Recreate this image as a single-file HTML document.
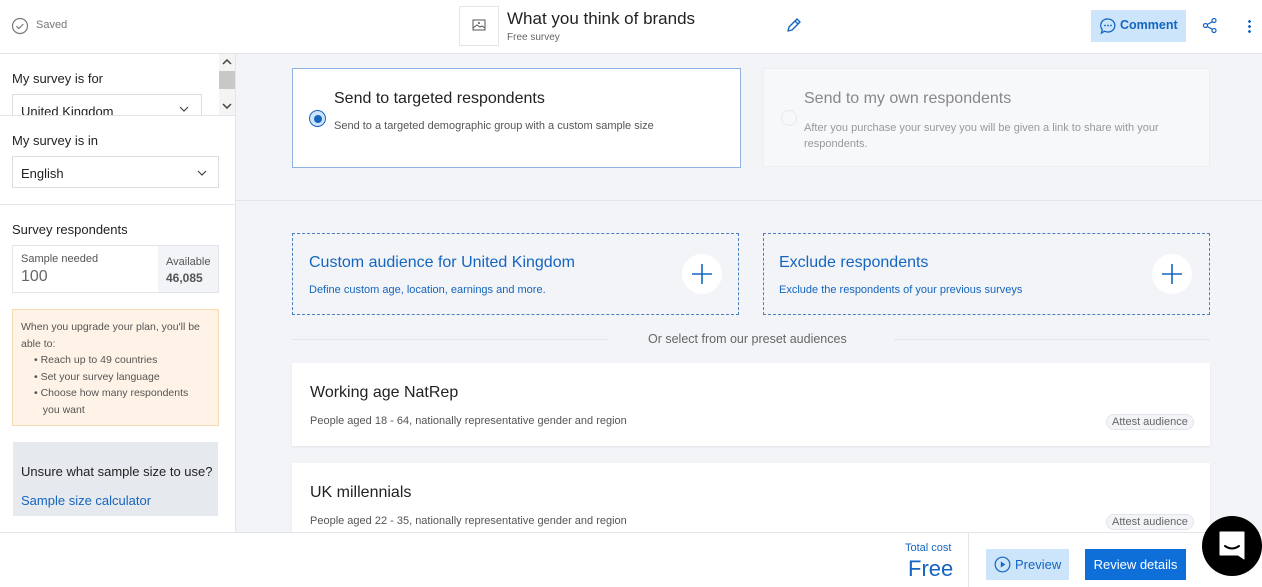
<!DOCTYPE html>
<html><head><meta charset="utf-8"><style>
*{box-sizing:border-box;margin:0;padding:0}
body{width:1262px;height:587px;overflow:hidden;font-family:"Liberation Sans",Arial,sans-serif;background:#f2f4f8;position:relative;color:#222}
.a{position:absolute}
.blue{color:#1565c0}
</style></head><body>
<!-- header -->
<div class="a" style="left:0;top:0;width:1262px;height:54px;background:#fff;border-bottom:1px solid #e3e5ea"></div>
<svg class="a" style="left:11px;top:17px" width="18" height="18" viewBox="0 0 18 18"><circle cx="9" cy="9" r="7.5" fill="none" stroke="#777" stroke-width="1.2"/><path d="M5.5 9.2l2.3 2.3 4.5-4.5" fill="none" stroke="#777" stroke-width="1.2"/></svg>
<div class="a" style="left:36px;top:19px;font-size:11px;color:#777">Saved</div>
<div class="a" style="left:459px;top:6px;width:40px;height:40px;border:1px solid #e3e5ea;background:#fff"></div>
<svg class="a" style="left:472px;top:19px" width="14" height="13" viewBox="0 0 14 13"><rect x="1" y="1" width="12" height="10" fill="none" stroke="#555" stroke-width="1"/><path d="M1 9l4-3 3 2 2-1 3 2" fill="none" stroke="#555"/><circle cx="7" cy="4" r="1" fill="#555"/></svg>
<div class="a" style="left:507px;top:9px;font-size:17px;color:#222">What you think of brands</div>
<div class="a" style="left:507px;top:32px;font-size:10px;color:#666">Free survey</div>
<svg class="a" style="left:785px;top:17px" width="17" height="17" viewBox="0 0 17 17"><path d="M3 14l1-4 8-8 3 3-8 8z M10 4l3 3" fill="none" stroke="#1565c0" stroke-width="1.4" stroke-linejoin="round"/></svg>
<div class="a" style="left:1091px;top:10px;width:95px;height:32px;background:#cce5fb"></div>
<svg class="a" style="left:1099px;top:17px" width="18" height="18" viewBox="0 0 18 18"><path d="M9 2a7 6.5 0 1 1-3.5 12.2L2.5 16l.8-3.3A6.5 6.5 0 0 1 9 2z" fill="none" stroke="#1565c0" stroke-width="1.3"/><circle cx="6" cy="8.5" r=".9" fill="#1565c0"/><circle cx="9" cy="8.5" r=".9" fill="#1565c0"/><circle cx="12" cy="8.5" r=".9" fill="#1565c0"/></svg>
<div class="a" style="left:1120px;top:18px;font-size:12.5px;font-weight:bold;color:#1565c0">Comment</div>
<svg class="a" style="left:1202px;top:17px" width="16" height="17" viewBox="0 0 16 17"><circle cx="12" cy="3.5" r="2" fill="none" stroke="#1565c0" stroke-width="1.2"/><circle cx="12" cy="13.5" r="2" fill="none" stroke="#1565c0" stroke-width="1.2"/><circle cx="3.5" cy="8.5" r="2" fill="none" stroke="#1565c0" stroke-width="1.2"/><path d="M5.3 7.5l5-2.8M5.3 9.5l5 2.8" stroke="#1565c0" stroke-width="1.2"/></svg>
<div class="a" style="left:1248px;top:19px;width:3px;height:14px;background:radial-gradient(circle,#1565c0 1.3px,transparent 1.5px) 0 0/3px 5px"></div>

<!-- sidebar -->
<div class="a" style="left:0;top:54px;width:236px;height:478px;background:#fff;border-right:1px solid #e3e5ea"></div>
<div class="a" style="left:12px;top:71px;font-size:13px">My survey is for</div>
<div class="a" style="left:12px;top:94px;width:190px;height:22px;border:1px solid #ddd;border-bottom:none;font-size:13px;padding:9px 8px;overflow:hidden">United Kingdom</div>
<svg class="a" style="left:179px;top:106px" width="10" height="6" viewBox="0 0 10 6"><path d="M1 1l4 4 4-4" fill="none" stroke="#444" stroke-width="1.2"/></svg>
<div class="a" style="left:219px;top:54px;width:16px;height:62px;background:#f4f4f4"></div>
<div class="a" style="left:219px;top:71px;width:16px;height:18px;background:#c8c8c8"></div>
<svg class="a" style="left:222px;top:59px" width="10" height="6" viewBox="0 0 10 6"><path d="M1 5l4-4 4 4" fill="none" stroke="#444" stroke-width="1.5"/></svg>
<svg class="a" style="left:222px;top:103px" width="10" height="6" viewBox="0 0 10 6"><path d="M1 1l4 4 4-4" fill="none" stroke="#444" stroke-width="1.5"/></svg>
<div class="a" style="left:0;top:115px;width:235px;height:1px;background:#e3e5ea"></div>
<div class="a" style="left:12px;top:133px;font-size:13px">My survey is in</div>
<div class="a" style="left:12px;top:156px;width:207px;height:32px;border:1px solid #ddd;font-size:13px;padding:9px 8px">English</div>
<svg class="a" style="left:197px;top:170px" width="10" height="6" viewBox="0 0 10 6"><path d="M1 1l4 4 4-4" fill="none" stroke="#444" stroke-width="1.2"/></svg>
<div class="a" style="left:0;top:204px;width:235px;height:1px;background:#e3e5ea"></div>
<div class="a" style="left:12px;top:222px;font-size:13px">Survey respondents</div>
<div class="a" style="left:12px;top:245px;width:207px;height:48px;border:1px solid #e3e5ea"></div>
<div class="a" style="left:158px;top:246px;width:60px;height:46px;background:#f2f4f8"></div>
<div class="a" style="left:21px;top:253px;font-size:11px;color:#555">Sample needed</div>
<div class="a" style="left:21px;top:268px;font-size:16px;color:#666">100</div>
<div class="a" style="left:166px;top:256px;font-size:11px;color:#555">Available</div>
<div class="a" style="left:166px;top:271px;font-size:12px;font-weight:bold;color:#555">46,085</div>
<div class="a" style="left:12px;top:309px;width:207px;height:117px;background:#fef3e6;border:1px solid #f5d9b0;font-size:10.5px;color:#555;line-height:16.5px;padding:9px 8px">When you upgrade your plan, you'll be able to:<div style="padding-left:13px">• Reach up to 49 countries<br>• Set your survey language<br>• Choose how many respondents<br>&nbsp;&nbsp;&nbsp;you want</div></div>
<div class="a" style="left:13px;top:442px;width:205px;height:74px;background:#e6e9ed"></div>
<div class="a" style="left:21px;top:464px;font-size:13px;color:#222">Unsure what sample size to use?</div>
<div class="a blue" style="left:21px;top:493px;font-size:13px">Sample size calculator</div>

<!-- main top -->
<div class="a" style="left:236px;top:200px;width:1026px;height:1px;background:#e3e5ea"></div>
<div class="a" style="left:292px;top:68px;width:449px;height:100px;background:#fff;border:1px solid #8fb3e0"></div>
<div class="a" style="left:309px;top:110px;width:17px;height:17px;border-radius:50%;background:#cfe4fb;border:1.5px solid #1565c0"></div>
<div class="a" style="left:313.5px;top:114.5px;width:8px;height:8px;border-radius:50%;background:#1565c0"></div>
<div class="a" style="left:334px;top:90px;font-size:16px">Send to targeted respondents</div>
<div class="a" style="left:334px;top:120px;font-size:11px;color:#555">Send to a targeted demographic group with a custom sample size</div>
<div class="a" style="left:763px;top:68px;width:447px;height:99px;background:#f7f8fa;border:1px solid #eceef2"></div>
<div class="a" style="left:781px;top:110px;width:16px;height:16px;border-radius:50%;border:1px solid #e8e8e8"></div>
<div class="a" style="left:804px;top:90px;font-size:16px;color:#888">Send to my own respondents</div>
<div class="a" style="left:804px;top:120px;font-size:11px;color:#999;line-height:16px;width:380px">After you purchase your survey you will be given a link to share with your respondents.</div>

<!-- dashed cards -->
<div class="a" style="left:292px;top:233px;width:447px;height:82px;border:1px dashed #4a7fc0"></div>
<div class="a blue" style="left:309px;top:254px;font-size:16px">Custom audience for United Kingdom</div>
<div class="a blue" style="left:309px;top:284px;font-size:11px">Define custom age, location, earnings and more.</div>
<div class="a" style="left:682px;top:254px;width:40px;height:40px;border-radius:50%;background:#fff"></div>
<svg class="a" style="left:691px;top:263px" width="22" height="22" viewBox="0 0 22 22"><path d="M11 1v20M1 11h20" stroke="#1565c0" stroke-width="1.6"/></svg>
<div class="a" style="left:763px;top:233px;width:447px;height:82px;border:1px dashed #4a7fc0"></div>
<div class="a blue" style="left:779px;top:254px;font-size:16px">Exclude respondents</div>
<div class="a blue" style="left:779px;top:284px;font-size:11px">Exclude the respondents of your previous surveys</div>
<div class="a" style="left:1152px;top:254px;width:40px;height:40px;border-radius:50%;background:#fff"></div>
<svg class="a" style="left:1161px;top:263px" width="22" height="22" viewBox="0 0 22 22"><path d="M11 1v20M1 11h20" stroke="#1565c0" stroke-width="1.6"/></svg>
<div class="a" style="left:292px;top:339px;width:316px;height:1px;background:#e3e5ea"></div>
<div class="a" style="left:894px;top:339px;width:316px;height:1px;background:#e3e5ea"></div>
<div class="a" style="left:648px;top:332px;font-size:12.5px;color:#666">Or select from our preset audiences</div>

<div class="a" style="left:292px;top:363px;width:918px;height:83px;background:#fff;box-shadow:0 1px 2px rgba(0,0,0,.08)"></div>
<div class="a" style="left:310px;top:384px;font-size:16px">Working age NatRep</div>
<div class="a" style="left:310px;top:415px;font-size:11px;color:#555">People aged 18 - 64, nationally representative gender and region</div>
<div class="a" style="left:1106px;top:414px;font-size:11px;color:#666;background:#f2f4f8;border:1px solid #e3e5ea;border-radius:8px;padding:1px 5px">Attest audience</div>
<div class="a" style="left:292px;top:463px;width:918px;height:75px;background:#fff;box-shadow:0 1px 2px rgba(0,0,0,.08)"></div>
<div class="a" style="left:310px;top:484px;font-size:16px">UK millennials</div>
<div class="a" style="left:310px;top:515px;font-size:11px;color:#555">People aged 22 - 35, nationally representative gender and region</div>
<div class="a" style="left:1106px;top:514px;font-size:11px;color:#666;background:#f2f4f8;border:1px solid #e3e5ea;border-radius:8px;padding:1px 5px">Attest audience</div>

<!-- footer -->
<div class="a" style="left:0;top:532px;width:1262px;height:55px;background:#fff;border-top:1px solid #e3e5ea"></div>
<div class="a" style="left:968px;top:533px;width:1px;height:54px;background:#e3e5ea"></div>
<div class="a blue" style="left:905px;top:542px;font-size:11px">Total cost</div>
<div class="a blue" style="left:908px;top:556px;font-size:22px">Free</div>
<div class="a" style="left:986px;top:549px;width:83px;height:31px;background:#cce5fb"></div>
<svg class="a" style="left:994px;top:556px" width="17" height="17" viewBox="0 0 17 17"><circle cx="8.5" cy="8.5" r="7.3" fill="none" stroke="#1565c0" stroke-width="1.2"/><path d="M6.8 5.5v6l4.5-3z" fill="#1565c0"/></svg>
<div class="a blue" style="left:1015px;top:557px;font-size:13px">Preview</div>
<div class="a" style="left:1085px;top:549px;width:101px;height:31px;background:#0f6fd9;color:#fff;font-size:13px;text-align:center;line-height:31px">Review details</div>
<div class="a" style="left:1202px;top:516px;width:60px;height:60px;border-radius:50%;background:#000"></div>
<svg class="a" style="left:1217px;top:530px" width="30" height="32" viewBox="0 0 30 32"><path d="M3 2h24v27l-6-4H3z" fill="#fff" stroke="#fff" stroke-linejoin="round"/><path d="M8 16q7 5 14 0" fill="none" stroke="#000" stroke-width="2" stroke-linecap="round"/></svg>
</body></html>
